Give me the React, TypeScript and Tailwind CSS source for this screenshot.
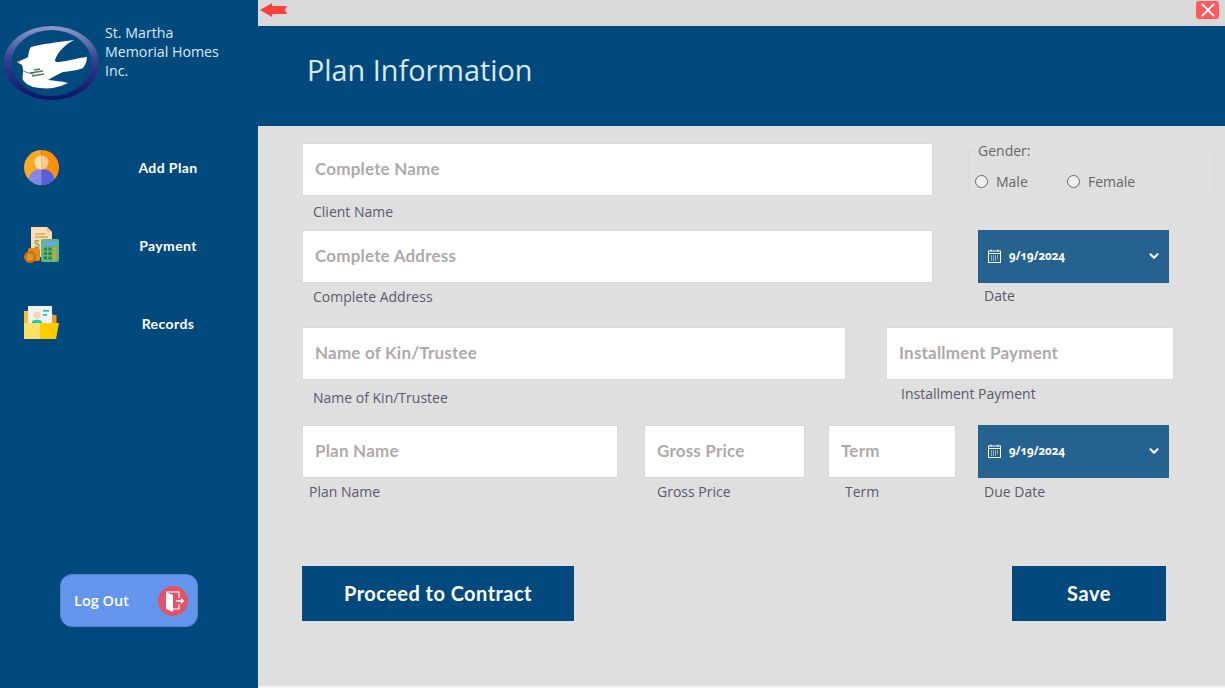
import { ChevronDown, X } from "lucide-react";

const sans = "font-['Open_Sans','Noto_Sans',sans-serif]";
const bold = "font-['Lato','Open_Sans',sans-serif] font-bold";

function Logo() {
  return (
    <svg width="96" height="76" viewBox="0 0 96 76" className="shrink-0">
      <defs>
        <linearGradient id="ring" x1="0" y1="0" x2="0" y2="1">
          <stop offset="0" stopColor="#8d9cc8" />
          <stop offset="0.45" stopColor="#33418f" />
          <stop offset="1" stopColor="#0d1466" />
        </linearGradient>
      </defs>
      <ellipse cx="47.5" cy="38" rx="47.5" ry="37" fill="url(#ring)" />
      <ellipse cx="47.5" cy="38" rx="40" ry="33" fill="#024a7d" />
      <path
        d="M13 37 L18 35 C20 34 23 33 24 32 C25 27 25 24 27 22 C36 19 56 17 70 15 C62 19 54 26 51 35 C51 37 52 37 55 37 C64 36 74 33 83 32 C83 36 81 41 79 43 C72 46 65 46 59 47 C54 49 49 52 44 55 C50 56 58 56 64 58 C60 60 54 62 49 63 C42 64 35 63 29 62 C24 60 21 58 19 55 C18 52 19 50 19 47 C19 45 19 42 18 40 C16 39 14 38 13 37 Z"
        fill="#ffffff"
      />
      <path d="M13 40 C16 45 22 48 30 49" stroke="#2f5f45" strokeWidth="0.8" fill="none" />
      <path d="M26 48 L39 46 M28 51 L40 49 M30 45 L36 44" stroke="#4c7a58" strokeWidth="1.4" fill="none" />
      <path d="M13 37 L16 35.5 L16 38.5 Z" fill="#e0a030" />
    </svg>
  );
}

function AddPlanIcon() {
  return (
    <svg width="35" height="35" viewBox="0 0 35 35">
      <clipPath id="avatar">
        <circle cx="17.5" cy="17.5" r="17.5" />
      </clipPath>
      <g clipPath="url(#avatar)">
        <rect width="17.5" height="35" fill="#ffa726" />
        <rect x="17.5" width="17.5" height="35" fill="#ff8f0a" />
        <path d="M5 35 V29 C5 23 11 19 17.5 19 V35 Z" fill="#8389ea" />
        <path d="M30 35 V29 C30 23 24 19 17.5 19 V35 Z" fill="#5560e0" />
        <path d="M17.5 5.5 A7 7 0 0 0 17.5 19.5 Z" fill="#ffdcae" />
        <path d="M17.5 5.5 A7 7 0 0 1 17.5 19.5 Z" fill="#fdcb91" />
      </g>
    </svg>
  );
}

function PaymentIcon() {
  return (
    <svg width="35" height="36" viewBox="0 0 35 36">
      <path d="M7 0 H23 L28 5 V30 H7 Z" fill="#ffdcae" />
      <path d="M23 0 L28 5 H23 Z" fill="#f5c58c" />
      <path d="M11 7 H21 M11 10 H24" stroke="#9d9a5a" strokeWidth="1" />
      <text x="10" y="21" fontSize="10" fill="#6f9a58" fontFamily="Liberation Sans">$</text>
      <rect x="4" y="21" width="12" height="13" rx="2" fill="#e08a1a" />
      <circle cx="6" cy="30" r="6" fill="#c96f10" />
      <circle cx="6" cy="30" r="3.5" fill="#e8951f" />
      <rect x="17" y="12" width="18" height="23" rx="2" fill="#62b87a" />
      <rect x="19.5" y="14" width="13" height="4.5" fill="#64a8e8" />
      {[20.5, 25, 29.5].map((y) =>
        [20, 24.5].map((x) => <rect key={`${x}-${y}`} x={x} y={y} width="3" height="3" fill="#2f7a50" />)
      )}
      <rect x="29" y="20.5" width="3" height="2.5" fill="#f09a1a" />
      <rect x="29" y="25" width="3" height="7.5" fill="#f09a1a" />
    </svg>
  );
}

function RecordsIcon() {
  return (
    <svg width="35" height="34" viewBox="0 0 35 34">
      <path d="M0 5 H24 L32 11 V26 H0 Z" fill="#ffbd2e" />
      <rect x="28" y="9" width="4.5" height="12" fill="#f59a23" />
      <rect x="4" y="0" width="24" height="25" fill="#eef2f5" />
      <rect x="19" y="4" width="6" height="1.6" fill="#1fb5ac" />
      <rect x="19" y="8" width="4" height="1.6" fill="#1fb5ac" />
      <circle cx="13" cy="9" r="3.6" fill="#ffd6a8" />
      <path d="M8 16 C8 13 18 13 18 16 V19 H8 Z" fill="#19cfae" />
      <path d="M0 33 L0 17 H16 V33 Z" fill="#ffe066" />
      <path d="M16 17 H35 L32 33 H16 Z" fill="#ffcc00" />
    </svg>
  );
}

function DoorIcon() {
  return (
    <svg width="30" height="30" viewBox="0 0 30 30">
      <circle cx="15" cy="15" r="15" fill="#e35266" />
      <path d="M8 6 H21 V12 M21 18 V23 H15" stroke="#fff" strokeWidth="1.2" fill="none" />
      <path d="M8 6 L15 9 V26 L8 23 Z" fill="#fff" />
      <path d="M18 15 H25 M23 12.8 L25.4 15 L23 17.2" stroke="#fff" strokeWidth="1.3" fill="none" />
    </svg>
  );
}

function CalendarIcon() {
  return (
    <svg width="13" height="14" viewBox="0 0 13 14" fill="none" stroke="#fff" strokeWidth="1">
      <rect x="0.5" y="2" width="12" height="11.5" />
      <path d="M0.5 4.5 H12.5 M3 0.5 V2.5 M10 0.5 V2.5" />
      <path d="M3 7 H10 M3 9 H10 M3 11 H8" strokeDasharray="1 1" />
    </svg>
  );
}

function NavItem({ icon, label }: { icon: React.ReactNode; label: string }) {
  return (
    <div className="flex h-[78px] items-center pl-6">
      <div className="flex w-[35px] justify-center">{icon}</div>
      <span className={`${bold} ml-[44px] w-[130px] text-center text-[14px] tracking-[0.4px] text-white`}>{label}</span>
    </div>
  );
}

function Field({
  placeholder,
  label,
  width,
  labelPad,
  labelGap = "mt-2",
}: {
  placeholder: string;
  label: string;
  width: string;
  labelPad: string;
  labelGap?: string;
}) {
  return (
    <div className={`flex shrink-0 flex-col ${width}`}>
      <input
        placeholder={placeholder}
        className={`${bold} h-[53px] w-full border border-[#d8d8d8] bg-white px-3 pb-[2px] text-[17px] tracking-[0.2px] text-[#333] outline-none placeholder:text-[#aeaaaa]`}
      />
      <span className={`${sans} ${labelGap} ${labelPad} text-[14px] leading-[18px] text-[#5a5a6a]`}>{label}</span>
    </div>
  );
}

function DateField({ label, labelGap = "mt-[4px]" }: { label: string; labelGap?: string }) {
  return (
    <div className="flex w-[191px] shrink-0 flex-col">
      <div className="flex h-[53px] items-center bg-[#26628f] pb-[2px] pl-[10px] pr-[8px] text-white">
        <CalendarIcon />
        <span className={`${sans} ml-2 flex-1 text-[11.5px] font-bold oldstyle-nums`}>9/19/2024</span>
        <ChevronDown size={14} strokeWidth={3.5} />
      </div>
      <span className={`${sans} ${labelGap} pl-[6px] text-[14px] leading-[18px] text-[#5a5a6a]`}>{label}</span>
    </div>
  );
}

function Radio({ label, className }: { label: string; className: string }) {
  return (
    <label className={`flex items-center ${className}`}>
      <span className="h-[13px] w-[13px] rounded-full border border-[#666] bg-[#f0f0f0]" />
      <span className={`${sans} ml-2 text-[14px] text-[#666]`}>{label}</span>
    </label>
  );
}

export default function App() {
  return (
    <div className="flex h-[688px] w-[1225px] overflow-hidden bg-[#dfdfdf]">
      <aside className="flex w-[258px] shrink-0 flex-col bg-[#024a7d]">
        <div className="flex h-[128px] items-start pl-[4px] pt-[25px]">
          <Logo />
          <p className={`${sans} ml-[5px] mt-[-2px] text-[14.2px] leading-[19px] text-[#dbe9f5]`}>
            St. Martha
            <br />
            Memorial Homes
            <br />
            Inc.
          </p>
        </div>
        <nav className="flex flex-col">
          <NavItem icon={<AddPlanIcon />} label="Add Plan" />
          <NavItem icon={<PaymentIcon />} label="Payment" />
          <NavItem icon={<RecordsIcon />} label="Records" />
        </nav>
        <button className="ml-[60px] mt-[212px] flex h-[53px] w-[138px] items-center justify-between rounded-xl border border-[#5585c8] bg-[#6495ed] pl-[13px] pr-[9px]">
          <span className={`${sans} text-[14.5px] font-semibold text-white`}>Log Out</span>
          <DoorIcon />
        </button>
      </aside>

      <main className="flex min-w-0 flex-1 flex-col">
        <div className="flex h-[26px] items-start justify-between bg-[#d9d9d9] pl-[2px] pr-[6px]">
          <svg width="27" height="14" viewBox="0 0 27 14" className="mt-[3px]">
            <path d="M0 7 L12 0 V3 H27 L25 7 L27 11 H12 V14 Z" fill="#ff4040" />
          </svg>
          <button className="mt-[1px] flex h-[18px] w-[23px] items-center justify-center rounded-[3px] bg-[#ff5a5a] text-white">
            <X size={22} strokeWidth={2} />
          </button>
        </div>
        <header className="flex h-[100px] items-center bg-[#024a7d] pb-3 pl-[49px]">
          <h1 className={`${sans} text-[28.8px] font-normal text-[#dbe9f5]`}>Plan Information</h1>
        </header>

        <section className="flex flex-1 flex-col pl-[44px] pt-[17px]">
          <div className="flex h-[87px]">
            <Field placeholder="Complete Name" label="Client Name" width="w-[631px]" labelPad="pl-[11px]" labelGap="mt-[7px]" />
            <fieldset className="ml-[35px] h-[52px] w-[247px] rounded-[2px] border border-[#d9d9d9] pl-[6px]">
              <legend className={`${sans} ml-[1px] px-[2px] text-[14px] leading-[15px] text-[#666]`}>Gender:</legend>
              <div className="mt-[13px] flex">
                <Radio label="Male" className="w-[92px]" />
                <Radio label="Female" className="w-[100px]" />
              </div>
            </fieldset>
          </div>
          <div className="flex h-[97px]">
            <Field placeholder="Complete Address" label="Complete Address" width="w-[631px]" labelPad="pl-[11px]" labelGap="mt-[5px]" />
            <div className="ml-[45px]">
              <DateField label="Date" />
            </div>
          </div>
          <div className="flex h-[98px]">
            <Field placeholder="Name of Kin/Trustee" label="Name of Kin/Trustee" width="w-[544px]" labelPad="pl-[11px]" labelGap="mt-[9px]" />
            <div className="ml-[40px]">
              <Field placeholder="Installment Payment" label="Installment Payment" width="w-[288px]" labelPad="pl-[15px]" labelGap="mt-[5px]" />
            </div>
          </div>
          <div className="flex">
            <Field placeholder="Plan Name" label="Plan Name" width="w-[316px]" labelPad="pl-[7px]" labelGap="mt-[5px]" />
            <div className="ml-[26px]">
              <Field placeholder="Gross Price" label="Gross Price" width="w-[161px]" labelPad="pl-[13px]" labelGap="mt-[5px]" />
            </div>
            <div className="ml-[23px]">
              <Field placeholder="Term" label="Term" width="w-[128px]" labelPad="pl-[17px]" labelGap="mt-[5px]" />
            </div>
            <div className="ml-[22px]">
              <DateField label="Due Date" labelGap="mt-[5px]" />
            </div>
          </div>
          <div className="mt-[65px] flex">
            <button className={`${bold} h-[55px] w-[272px] bg-[#024a7d] pb-[1px] text-[20px] tracking-[0.45px] text-white`}>Proceed to Contract</button>
            <button className={`${bold} ml-[438px] h-[55px] w-[154px] bg-[#024a7d] pb-[1px] text-[20px] tracking-[0.6px] text-white`}>Save</button>
          </div>
        </section>
        <div className="h-[2px] bg-[#f4f4f4]" />
      </main>
    </div>
  );
}
